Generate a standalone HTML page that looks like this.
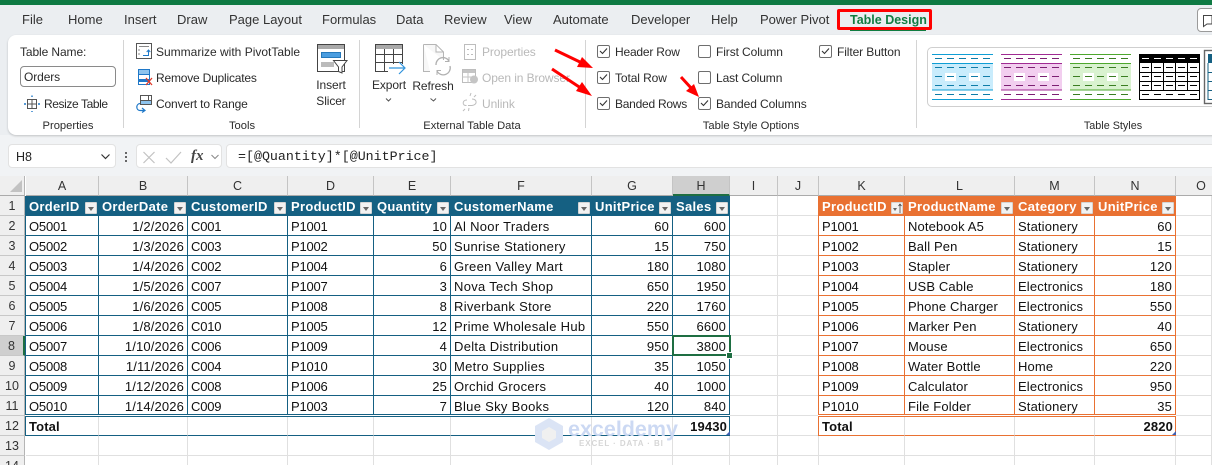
<!DOCTYPE html>
<html><head><meta charset="utf-8">
<style>
html,body{margin:0;padding:0}
body{width:1212px;height:465px;overflow:hidden;position:relative;background:#fff;font-family:"Liberation Sans",sans-serif;color:#242424}
.a{position:absolute;white-space:nowrap;line-height:16px}
.t{position:absolute;top:12px;font-size:13px;line-height:16px;color:#333;white-space:nowrap}
.r{font-size:12px;letter-spacing:-.1px;color:#2b2b2b}
.gl{font-size:11.2px;letter-spacing:0;color:#2b2b2b}
.g{color:#b9b9b9}
.c{transform:translateX(-50%)}
.dv{position:absolute;top:40px;width:1px;height:88px;background:#d4d4d4}
.cb{position:absolute;width:11px;height:11px;border:1px solid #6e6e6e;border-radius:2px;background:#fff}
.ch{position:absolute;top:176px;height:19px;background:#efefef;border-right:1px solid #c4c4c4;border-bottom:1px solid #ababab;box-sizing:content-box;text-align:center;font-size:12.5px;line-height:21px;color:#333;overflow:hidden}
#rh{position:absolute;left:0;top:196px;width:25px;height:269px;overflow:hidden}
#rh div{height:19px;line-height:21px;border-bottom:1px solid #c8c8c8;background:#efefef;border-right:1px solid #b5b5b5;text-align:center;font-size:12.5px;color:#333;width:24px;overflow:hidden}
#gridwrap{position:absolute;left:26px;top:196px;width:1186px;height:269px;overflow:hidden}
table{border-spacing:0;table-layout:fixed;width:1186px;font-size:13px;color:#111;letter-spacing:.14px}
td{height:20px;box-sizing:border-box;border-right:1px solid #e0e0e0;border-bottom:1px solid #e0e0e0;padding:2px 3px 0 3px;line-height:17px;white-space:nowrap;overflow:hidden;position:relative}
td:nth-child(6){letter-spacing:.3px}
td:nth-child(1),td:nth-child(3),td:nth-child(4),td:nth-child(11){letter-spacing:-.2px}
td.n{text-align:right}
td.b{border-right-color:#156082;border-bottom-color:#156082}
td.o{border-right-color:#e97132;border-bottom-color:#e97132}
tr.h td{font-weight:bold;color:#fff;letter-spacing:.3px}
tr.h td.b{background:#156082}
tr.h td.o{background:#e97132}
tr.tt td{font-weight:bold;letter-spacing:.14px}
td.lb{border-bottom-color:#156082}
td.lo{border-bottom-color:#e97132}
td i{position:absolute;right:1px;top:6px;width:10px;height:10px;background:#f2f2f2;border:1px solid #d4d4d4;border-radius:1px;display:block}
td i:after{content:"";position:absolute;left:1.500px;top:3.500px;border-left:3.500px solid transparent;border-right:3.500px solid transparent;border-top:4px solid #666}
td i.s:after{left:.5px;top:5px;border-left-width:2.500px;border-right-width:2.500px;border-top-width:3px}
</style></head>
<body>
<div style="position:absolute;left:0;top:0;width:1212px;height:176px;background:#ebeef1"></div>
<div style="position:absolute;left:0;top:0;width:1212px;height:5px;background:#0e7a43"></div>
<div style="position:absolute;left:0;top:135px;width:1212px;height:41px;background:#f1f3f5"></div>

<div class="t" style="left:22px">File</div>
<div class="t" style="left:68px">Home</div>
<div class="t" style="left:124px">Insert</div>
<div class="t" style="left:177px">Draw</div>
<div class="t" style="left:229px">Page Layout</div>
<div class="t" style="left:322px">Formulas</div>
<div class="t" style="left:396px">Data</div>
<div class="t" style="left:444px">Review</div>
<div class="t" style="left:504px">View</div>
<div class="t" style="left:553px">Automate</div>
<div class="t" style="left:631px">Developer</div>
<div class="t" style="left:711px">Help</div>
<div class="t" style="left:760px">Power Pivot</div>
<div class="t" style="left:850px;color:#107c41;font-weight:bold;font-size:12.5px">Table Design</div>
<div style="position:absolute;left:850px;top:29px;width:76px;height:2px;background:#107c41"></div>
<div style="position:absolute;left:837px;top:9px;width:95px;height:21px;box-sizing:border-box;border:3px solid #f00;border-radius:2px"></div>
<div style="position:absolute;left:1197px;top:8px;width:30px;height:24px;box-sizing:border-box;border:1px solid #9a9a9a;border-radius:4px;background:#fff"></div>

<!-- ribbon -->
<div style="position:absolute;left:8px;top:35px;width:1220px;height:100px;background:#fff;border-radius:8px;box-shadow:0 1px 2px rgba(0,0,0,.2)"></div>
<div class="dv" style="left:123px"></div><div class="dv" style="left:359px"></div><div class="dv" style="left:585px"></div><div class="dv" style="left:916px"></div>

<div class="a r" style="left:20px;top:44px">Table Name:</div>
<div class="a r" style="left:20px;top:66px;width:96px;height:21px;box-sizing:border-box;border:1px solid #8a8a8a;border-radius:4px;padding:2px 0 0 3px">Orders</div>
<div class="a r" style="left:44px;top:96px;letter-spacing:-.4px">Resize Table</div>
<div class="a gl c" style="left:68px;top:118px">Properties</div>
<div class="a r" style="left:156px;top:44px;letter-spacing:0">Summarize with PivotTable</div>
<div class="a r" style="left:156px;top:70px;letter-spacing:-.2px">Remove Duplicates</div>
<div class="a r" style="left:156px;top:96px;letter-spacing:-.15px">Convert to Range</div>
<div class="a r c" style="left:331px;top:77px">Insert</div>
<div class="a r c" style="left:331px;top:93px">Slicer</div>
<div class="a gl c" style="left:242px;top:118px">Tools</div>
<div class="a r c" style="left:389px;top:77px">Export</div>
<div class="a r c" style="left:433px;top:78px">Refresh</div>
<div class="a r g" style="left:482px;top:44px">Properties</div>
<div class="a r g" style="left:482px;top:70px">Open in Browser</div>
<div class="a r g" style="left:482px;top:96px">Unlink</div>
<div class="a gl c" style="left:472px;top:118px">External Table Data</div>

<div class="cb" style="left:597px;top:45px"></div><div class="a r" style="left:615px;top:44px;letter-spacing:-.2px">Header Row</div>
<div class="cb" style="left:597px;top:71px"></div><div class="a r" style="left:615px;top:70px">Total Row</div>
<div class="cb" style="left:597px;top:97px"></div><div class="a r" style="left:615px;top:96px;letter-spacing:-.25px">Banded Rows</div>
<div class="cb" style="left:698px;top:45px"></div><div class="a r" style="left:716px;top:44px">First Column</div>
<div class="cb" style="left:698px;top:71px"></div><div class="a r" style="left:716px;top:70px">Last Column</div>
<div class="cb" style="left:698px;top:97px"></div><div class="a r" style="left:716px;top:96px">Banded Columns</div>
<div class="cb" style="left:819px;top:45px"></div><div class="a r" style="left:837px;top:44px">Filter Button</div>
<div class="a gl c" style="left:751px;top:118px">Table Style Options</div>
<div class="a gl c" style="left:1113px;top:118px;font-size:10.800px">Table Styles</div>
<div style="position:absolute;left:927px;top:47px;width:300px;height:60px;box-sizing:border-box;border:1px solid #cfcfcf;border-radius:5px"></div>

<!-- formula bar -->
<div style="position:absolute;left:8px;top:144px;width:108px;height:24px;box-sizing:border-box;background:#fff;border:1px solid #e2e2e2;border-radius:4px"></div>
<div class="a" style="left:16px;top:149px;font-size:12.500px">H8</div>
<div style="position:absolute;left:136px;top:144px;width:86px;height:24px;box-sizing:border-box;background:#fff;border:1px solid #e2e2e2;border-radius:4px"></div>
<div class="a" style="left:191px;top:147px;font:italic bold 15px/18px 'Liberation Serif',serif;color:#444">fx</div>
<div style="position:absolute;left:226px;top:144px;width:1000px;height:24px;box-sizing:border-box;background:#fff;border:1px solid #e2e2e2;border-radius:4px"></div>
<div class="a" style="left:238px;top:149px;font-family:'Liberation Mono',monospace;font-size:13.300px;color:#222">=[@Quantity]*[@UnitPrice]</div>

<!-- column headers -->
<div style="position:absolute;left:0;top:176px;width:25px;height:20px;background:#efefef;border-right:1px solid #b5b5b5;box-sizing:border-box;border-bottom:1px solid #ababab"></div>
<div class="ch" style="left:26px;width:72px">A</div>
<div class="ch" style="left:99px;width:88px">B</div>
<div class="ch" style="left:188px;width:99px">C</div>
<div class="ch" style="left:288px;width:85px">D</div>
<div class="ch" style="left:374px;width:76px">E</div>
<div class="ch" style="left:451px;width:140px">F</div>
<div class="ch" style="left:592px;width:80px">G</div>
<div class="ch" style="left:673px;width:56px;background:#cfcfcf;border-bottom:2px solid #1e6e42;height:18px">H</div>
<div class="ch" style="left:730px;width:47px">I</div>
<div class="ch" style="left:778px;width:40px">J</div>
<div class="ch" style="left:819px;width:85px">K</div>
<div class="ch" style="left:905px;width:109px">L</div>
<div class="ch" style="left:1015px;width:79px">M</div>
<div class="ch" style="left:1095px;width:80px">N</div>
<div class="ch" style="left:1176px;width:50px">O</div>

<!-- row headers -->
<div id="rh"><div>1</div><div>2</div><div>3</div><div>4</div><div>5</div><div>6</div><div>7</div><div style="background:#cfcfcf;border-right:2px solid #1e6e42;width:23px">8</div><div>9</div><div>10</div><div>11</div><div>12</div><div>13</div><div>14</div></div>

<div id="gridwrap">
<table>
<colgroup><col style="width:73px"><col style="width:89px"><col style="width:100px"><col style="width:86px"><col style="width:77px"><col style="width:141px"><col style="width:81px"><col style="width:57px"><col style="width:48px"><col style="width:41px"><col style="width:86px"><col style="width:110px"><col style="width:80px"><col style="width:81px"><col style="width:36px"></colgroup>
<tr class="h"><td class="b">OrderID<i></i></td><td class="b">OrderDate<i></i></td><td class="b">CustomerID<i></i></td><td class="b">ProductID<i></i></td><td class="b">Quantity<i></i></td><td class="b">CustomerName<i></i></td><td class="b">UnitPrice<i></i></td><td class="b">Sales<i></i></td><td></td><td></td><td class="o">ProductID<i class="s"></i></td><td class="o">ProductName<i></i></td><td class="o">Category<i></i></td><td class="o">UnitPrice<i></i></td><td></td></tr>
<tr><td class="b">O5001</td><td class="b n">1/2/2026</td><td class="b">C001</td><td class="b">P1001</td><td class="b n">10</td><td class="b">Al Noor Traders</td><td class="b n">60</td><td class="b n">600</td><td></td><td></td><td class="o">P1001</td><td class="o">Notebook A5</td><td class="o">Stationery</td><td class="o n">60</td><td></td></tr>
<tr><td class="b">O5002</td><td class="b n">1/3/2026</td><td class="b">C003</td><td class="b">P1002</td><td class="b n">50</td><td class="b">Sunrise Stationery</td><td class="b n">15</td><td class="b n">750</td><td></td><td></td><td class="o">P1002</td><td class="o">Ball Pen</td><td class="o">Stationery</td><td class="o n">15</td><td></td></tr>
<tr><td class="b">O5003</td><td class="b n">1/4/2026</td><td class="b">C002</td><td class="b">P1004</td><td class="b n">6</td><td class="b">Green Valley Mart</td><td class="b n">180</td><td class="b n">1080</td><td></td><td></td><td class="o">P1003</td><td class="o">Stapler</td><td class="o">Stationery</td><td class="o n">120</td><td></td></tr>
<tr><td class="b">O5004</td><td class="b n">1/5/2026</td><td class="b">C007</td><td class="b">P1007</td><td class="b n">3</td><td class="b">Nova Tech Shop</td><td class="b n">650</td><td class="b n">1950</td><td></td><td></td><td class="o">P1004</td><td class="o">USB Cable</td><td class="o">Electronics</td><td class="o n">180</td><td></td></tr>
<tr><td class="b">O5005</td><td class="b n">1/6/2026</td><td class="b">C005</td><td class="b">P1008</td><td class="b n">8</td><td class="b">Riverbank Store</td><td class="b n">220</td><td class="b n">1760</td><td></td><td></td><td class="o">P1005</td><td class="o">Phone Charger</td><td class="o">Electronics</td><td class="o n">550</td><td></td></tr>
<tr><td class="b">O5006</td><td class="b n">1/8/2026</td><td class="b">C010</td><td class="b">P1005</td><td class="b n">12</td><td class="b">Prime Wholesale Hub</td><td class="b n">550</td><td class="b n">6600</td><td></td><td></td><td class="o">P1006</td><td class="o">Marker Pen</td><td class="o">Stationery</td><td class="o n">40</td><td></td></tr>
<tr><td class="b">O5007</td><td class="b n">1/10/2026</td><td class="b">C006</td><td class="b">P1009</td><td class="b n">4</td><td class="b">Delta Distribution</td><td class="b n">950</td><td class="b n">3800</td><td></td><td></td><td class="o">P1007</td><td class="o">Mouse</td><td class="o">Electronics</td><td class="o n">650</td><td></td></tr>
<tr><td class="b">O5008</td><td class="b n">1/11/2026</td><td class="b">C004</td><td class="b">P1010</td><td class="b n">30</td><td class="b">Metro Supplies</td><td class="b n">35</td><td class="b n">1050</td><td></td><td></td><td class="o">P1008</td><td class="o">Water Bottle</td><td class="o">Home</td><td class="o n">220</td><td></td></tr>
<tr><td class="b">O5009</td><td class="b n">1/12/2026</td><td class="b">C008</td><td class="b">P1006</td><td class="b n">25</td><td class="b">Orchid Grocers</td><td class="b n">40</td><td class="b n">1000</td><td></td><td></td><td class="o">P1009</td><td class="o">Calculator</td><td class="o">Electronics</td><td class="o n">950</td><td></td></tr>
<tr><td class="b">O5010</td><td class="b n">1/14/2026</td><td class="b">C009</td><td class="b">P1003</td><td class="b n">7</td><td class="b">Blue Sky Books</td><td class="b n">120</td><td class="b n">840</td><td></td><td></td><td class="o">P1010</td><td class="o">File Folder</td><td class="o">Stationery</td><td class="o n">35</td><td></td></tr>
<tr class="tt"><td class="lb">Total</td><td class="lb"></td><td class="lb"></td><td class="lb"></td><td class="lb"></td><td class="lb"></td><td class="lb"></td><td class="b n" style="padding-right:2px">19430</td><td></td><td></td><td class="lo">Total</td><td class="lo"></td><td class="lo"></td><td class="o n" style="padding-right:2px">2820</td><td></td></tr>
<tr><td></td><td></td><td></td><td></td><td></td><td></td><td></td><td></td><td></td><td></td><td></td><td></td><td></td><td></td><td></td></tr>
<tr><td></td><td></td><td></td><td></td><td></td><td></td><td></td><td></td><td></td><td></td><td></td><td></td><td></td><td></td><td></td></tr>
</table>
</div>

<!-- table edges and double total rule -->
<div style="position:absolute;left:25px;top:196px;width:1px;height:240px;background:#156082"></div>
<div style="position:absolute;left:818px;top:196px;width:1px;height:240px;background:#e97132"></div>
<div style="position:absolute;left:25px;top:414px;width:705px;height:3px;box-sizing:border-box;border-top:1px solid #156082;border-bottom:1px solid #156082;background:#fff"></div>
<div style="position:absolute;left:818px;top:414px;width:358px;height:3px;box-sizing:border-box;border-top:1px solid #e97132;border-bottom:1px solid #e97132;background:#fff"></div>

<!-- watermark -->
<svg style="position:absolute;left:533px;top:416px" width="34" height="36" viewBox="0 0 34 36"><path d="M16 2 30 10V26L16 34 2 26V10Z" fill="#dbe4f5"/><path d="M16 11 23 15V22L16 26 9 22V15Z" fill="#f0f0f0"/></svg>
<div class="a" style="left:568px;top:417px;font-size:21.500px;line-height:24px;font-weight:bold;color:#ccd9f3">exceldemy</div>
<div class="a" style="left:579px;top:438px;font-size:8px;line-height:12px;letter-spacing:.9px;color:#d6d6d6;font-weight:bold">EXCEL · DATA · BI</div>

<!-- selection -->
<div style="position:absolute;left:672px;top:335px;width:59px;height:21px;box-sizing:border-box;border:2px solid #1e6e42"></div>
<div style="position:absolute;left:727px;top:353px;width:5px;height:5px;background:#1e6e42;outline:1px solid #fff"></div>
<svg style="position:absolute;left:0;top:0" width="1212" height="465" viewBox="0 0 1212 465" fill="none">
<defs>
<symbol id="sw" width="61" height="46" viewBox="0 0 61 46" overflow="visible">
<rect y="9.5" width="61" height="26.5" style="fill:var(--f)"/>
<g style="stroke:var(--l)" stroke-width="1"><path d="M0 .5H61M0 9.5H61M0 36H61M0 45.5H61"/></g>
<rect x="13" y="19" width="11" height="8" fill="#fff"/><rect x="37" y="19" width="11" height="8" fill="#fff"/>
<g style="stroke:var(--d)" stroke-width="1"><path d="M3 4.5h7M15 4.5h7M27 4.5h7M39 4.5h7M51 4.5h7M3 13.5h7M15 13.5h7M27 13.5h7M39 13.5h7M51 13.5h7M3 22.5h7M15 22.5h7M27 22.5h7M39 22.5h7M51 22.5h7M3 31.5h7M15 31.5h7M27 31.5h7M39 31.5h7M51 31.5h7M3 40.5h7M15 40.5h7M27 40.5h7M39 40.5h7M51 40.5h7"/></g>
</symbol>
</defs>
<!-- sheet corner -->
<path d="M22 180V192H10Z" fill="#c2c2c2"/>
<!-- sort icon in K -->
<path d="M900 204V213M898.500 206 900 204 901.500 206" stroke="#444" stroke-width=".8"/>
<!-- total resize handles -->
<path d="M730 431V435H726Z" fill="#3f5fb0"/><path d="M1176 431V435H1172Z" fill="#3f5fb0"/>

<!-- comment -->
<path d="M1203.500 15.500H1212V24H1207L1203.500 26.500Z" stroke="#444"/>
<!-- summarize -->
<rect x="136.500" y="43.500" width="15" height="15" fill="#fff" stroke="#555"/><path d="M139 46.500H149M139 49V51M139 53V55" stroke="#888"/><path d="M143 55.500H148.500V50M146.700 52 148.500 50 150.300 52" stroke="#1f78c8"/>
<!-- remove dup -->
<rect x="138.500" y="69.500" width="11" height="5" fill="#8ec4ee" stroke="#1f78c8"/><rect x="138.500" y="74.500" width="11" height="10" fill="#fff" stroke="#1f78c8"/><path d="M138.500 80.500H149.500" stroke="#1f78c8" stroke-width="3"/><path d="M146 78 152 85M152 78 146 85" stroke="#e03a2a" stroke-width="1.300"/><rect x="138" y="84" width="5" height="1" fill="#1f78c8"/>
<!-- convert -->
<rect x="140.500" y="95.500" width="8" height="5" fill="#fff" stroke="#555"/><rect x="140.500" y="100.500" width="11" height="4" fill="#8ec4ee" stroke="#555"/><rect x="148.500" y="95.500" width="3" height="5" fill="#fff" stroke="#555"/><path d="M145 110.500H140C136 110.500 135.500 104 140 103.500M142 108 145 110.500 142 112.500" stroke="#1f78c8" stroke-width="1.200"/>
<!-- resize -->
<rect x="27.500" y="99.500" width="9" height="9" fill="#fff" stroke="#555"/><path d="M27.500 104H36.500M32 99.500V108.500" stroke="#555"/><path d="M32 95.500V97M32 111V112M24 104H26M38 104H40" stroke="#1f78c8" stroke-width="1.400"/>
<!-- slicer -->
<rect x="317.500" y="44.500" width="27" height="27" fill="#fff" stroke="#444"/><rect x="318" y="45" width="26" height="4" fill="#a9a9a9"/><rect x="321.500" y="52.500" width="19" height="5" fill="#4a9de0" stroke="#2578bb"/><rect x="321" y="62" width="13" height="5" fill="#bbb"/><path d="M333.500 60.500H347L342 67V73L338.500 71.500V67Z" fill="#fff" stroke="#444"/>
<!-- export -->
<rect x="375.500" y="44.500" width="27" height="27" fill="#fff" stroke="#444"/><rect x="376" y="45" width="26" height="4" fill="#a9a9a9"/><path d="M375.500 54.500H402.500M375.500 62.500H402.500M384.500 49V71.500M393.500 49V71.500" stroke="#444"/><rect x="388" y="64" width="17" height="8" fill="#fff"/><path d="M389 68H404M399 62 405 68 399 74" stroke="#2f93dc" stroke-width="1.200" fill="none"/><path d="M386 98.500 388.500 101 391 98.500M430.500 98.500 433.500 101 436 98.500" stroke="#555"/>
<!-- refresh -->
<path d="M423.500 44.500H436L443.500 52V60M430 71.500H423.500V44.500M436 44.500V52H443.500" stroke="#b5b5b5" fill="#f7f7f7"/><path d="M436 65A7 7 0 0 1 449 61M450 66A7 7 0 0 1 437 71" stroke="#b0b0b0" stroke-width="1.300"/><path d="M449 57V61.500H445M437 75V70.500H441" stroke="#b0b0b0"/>
<!-- greyed icons -->
<rect x="464.500" y="44.500" width="11" height="15" stroke="#bdbdbd"/><path d="M467 49.500H469M471 49.500H473M467 54.500H469M471 54.500H473" stroke="#bdbdbd"/>
<rect x="462.500" y="69.500" width="13" height="13" stroke="#bdbdbd"/><rect x="463" y="70" width="12" height="3" fill="#c5c5c5"/><path d="M462.500 77H472M468 73V82.500" stroke="#c5c5c5"/><circle cx="474" cy="79.500" r="4" fill="#c5c5c5"/>
<path d="M467 100C462 100 462 106 466.500 105.500M472 99C477.500 99 477.500 105 472 105.500H468M470 96 471 93M474 97 476 95M465 109 463 111M469 108 468.500 111" stroke="#bdbdbd"/>
<!-- chevrons -->
<path d="M101.500 154.500 105.500 158.500 109.500 154.500" stroke="#333" stroke-width="1.200"/>
<path d="M211.500 155 215 158.500 218.500 155" stroke="#888"/>
<path d="M126 152V154M126 156V158M126 160V162" stroke="#444" stroke-width="1.600"/>
<path d="M143.500 152 154.500 163M154.500 152 143.500 163" stroke="#c2c2c2" stroke-width="1.200"/>
<path d="M166 158 171 163 181 152" stroke="#c2c2c2" stroke-width="1.200"/>
<!-- checkmarks -->
<g stroke="#333" stroke-width="1.100"><path d="M600 51 602.500 53.500 607 48.500M600 77 602.500 79.500 607 74.500M600 103 602.500 105.500 607 100.500M701 103 703.500 105.500 708 100.500M822 51 824.500 53.500 829 48.500"/></g>
<!-- gallery -->
<use href="#sw" x="932" y="54" style="--f:#c9ecfc;--l:#0f9ed5;--d:#0f7ca8"/>
<use href="#sw" x="1001" y="54" style="--f:#f2ceef;--l:#a02b93;--d:#7c1f72"/>
<use href="#sw" x="1070" y="54" style="--f:#d9f2d0;--l:#4ea72e;--d:#3a7d22"/>
<rect x="1139.500" y="54.500" width="60" height="45" fill="#fff" stroke="#000"/><rect x="1139" y="54" width="61" height="9" fill="#000"/>
<path d="M1139 72.500H1200M1139 81.500H1200M1139 90.500H1200M1151.500 63V90.500M1163.500 63V90.500M1175.500 63V90.500M1187.500 63V90.500" stroke="#000"/>
<path d="M1142 58.500h7M1154 58.500h7M1166 58.500h7M1178 58.500h7M1190 58.500h7" stroke="#fff"/>
<path d="M1142 67.500h7M1154 67.500h7M1166 67.500h7M1178 67.500h7M1190 67.500h7M1142 76.500h7M1154 76.500h7M1166 76.500h7M1178 76.500h7M1190 76.500h7M1142 85.500h7M1154 85.500h7M1166 85.500h7M1178 85.500h7M1190 85.500h7M1142 94.500h7M1154 94.500h7M1166 94.500h7M1178 94.500h7M1190 94.500h7" stroke="#000"/>
<rect x="1204.500" y="50.500" width="20" height="53" fill="#fff" stroke="#666" stroke-width="1.400"/>
<rect x="1208" y="54" width="8" height="9" fill="#156082"/><path d="M1208 72.500H1212M1208 81.500H1212M1208 90.500H1212M1208 63V100" stroke="#156082"/><path d="M1208 99.500H1212" stroke="#156082"/>
<!-- red arrows -->
<path d="M555 50 581 62.500" stroke="#f00" stroke-width="3"/><path d="M593 68 577 67 582 57Z" fill="#f00"/>
<path d="M552 69 580 87.500" stroke="#f00" stroke-width="3"/><path d="M592 96 576 91 582 82Z" fill="#f00"/>
<path d="M681 77 692 89" stroke="#f00" stroke-width="3"/><path d="M699 97 686 91 694 84Z" fill="#f00"/>
</svg>
</body></html>
